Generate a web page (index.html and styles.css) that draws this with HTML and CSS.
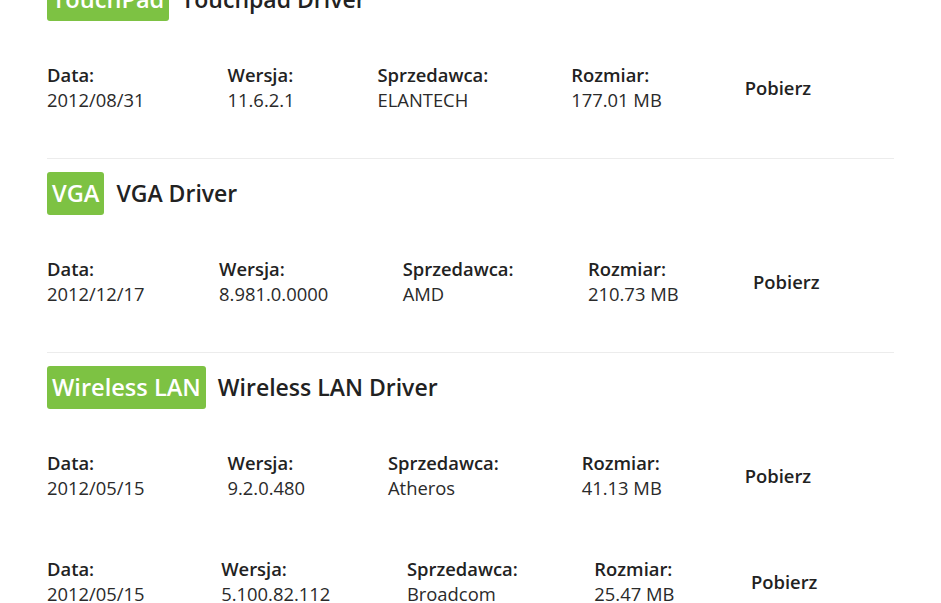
FILE: index.html
```html
<!DOCTYPE html>
<html>
<head>
  <title>Sterowniki</title>
  <link rel="stylesheet" href="styles.css">
</head>
<body>
  <div class="drivers">
    <div class="driver-group">
      <div class="driver-head">
        <span class="badge">TouchPad</span>
        <h2>Touchpad Driver</h2>
      </div>
      <div class="driver-row">
        <div class="cell"><div class="label">Data:</div><div class="value">2012/08/31</div></div>
        <div class="cell"><div class="label">Wersja:</div><div class="value">11.6.2.1</div></div>
        <div class="cell"><div class="label">Sprzedawca:</div><div class="value">ELANTECH</div></div>
        <div class="cell"><div class="label">Rozmiar:</div><div class="value">177.01 MB</div></div>
        <a class="download" href="#">Pobierz</a>
        <div class="spacer"></div>
      </div>
    </div>

    <div class="driver-group">
      <div class="driver-head">
        <span class="badge">VGA</span>
        <h2>VGA Driver</h2>
      </div>
      <div class="driver-row">
        <div class="cell"><div class="label">Data:</div><div class="value">2012/12/17</div></div>
        <div class="cell"><div class="label">Wersja:</div><div class="value">8.981.0.0000</div></div>
        <div class="cell"><div class="label">Sprzedawca:</div><div class="value">AMD</div></div>
        <div class="cell"><div class="label">Rozmiar:</div><div class="value">210.73 MB</div></div>
        <a class="download" href="#">Pobierz</a>
        <div class="spacer"></div>
      </div>
    </div>

    <div class="driver-group">
      <div class="driver-head">
        <span class="badge">Wireless LAN</span>
        <h2>Wireless LAN Driver</h2>
      </div>
      <div class="driver-row">
        <div class="cell"><div class="label">Data:</div><div class="value">2012/05/15</div></div>
        <div class="cell"><div class="label">Wersja:</div><div class="value">9.2.0.480</div></div>
        <div class="cell"><div class="label">Sprzedawca:</div><div class="value">Atheros</div></div>
        <div class="cell"><div class="label">Rozmiar:</div><div class="value">41.13 MB</div></div>
        <a class="download" href="#">Pobierz</a>
        <div class="spacer"></div>
      </div>
      <div class="driver-row">
        <div class="cell"><div class="label">Data:</div><div class="value">2012/05/15</div></div>
        <div class="cell"><div class="label">Wersja:</div><div class="value">5.100.82.112</div></div>
        <div class="cell"><div class="label">Sprzedawca:</div><div class="value">Broadcom</div></div>
        <div class="cell"><div class="label">Rozmiar:</div><div class="value">25.47 MB</div></div>
        <a class="download" href="#">Pobierz</a>
        <div class="spacer"></div>
      </div>
    </div>
  </div>
</body>
</html>
```

FILE: styles.css
```css
/* driver download list */
body {
  margin: 0;
  padding: 0;
  font-family: 'Open Sans', Arial, sans-serif;
  color: #222;
  background: #fff;
  overflow: hidden;
}

/* page is shown scrolled a little past the first header */
.drivers {
  padding: 0 47px;
  margin-top: -36px;
}

.driver-group {
  border-top: 1px solid #ececec;
  padding: 13px 0 18px;
}

.driver-head {
  display: flex;
  align-items: center;
  gap: 12px;
  margin-bottom: 13px;
}

.badge {
  background-color: #7dc243;
  color: #fff;
  font-size: 23.6px;
  font-weight: 600;
  line-height: 43px;
  padding: 0 5px;
  border-radius: 3px;
}

.driver-head h2 {
  margin: 0;
  font-size: 23px;
  font-weight: 600;
  line-height: 43px;
}

.driver-row {
  display: flex;
  justify-content: space-between;
  align-items: center;
  padding: 28px 0;
  font-size: 18.4px;
  line-height: 25px;
}

.label {
  font-weight: 600;
}

.value {
  font-weight: 400;
  color: #2a2a2a;
}

.download {
  font-weight: 600;
  color: #222;
  text-decoration: none;
}

.spacer {
  width: 0;
}
```
